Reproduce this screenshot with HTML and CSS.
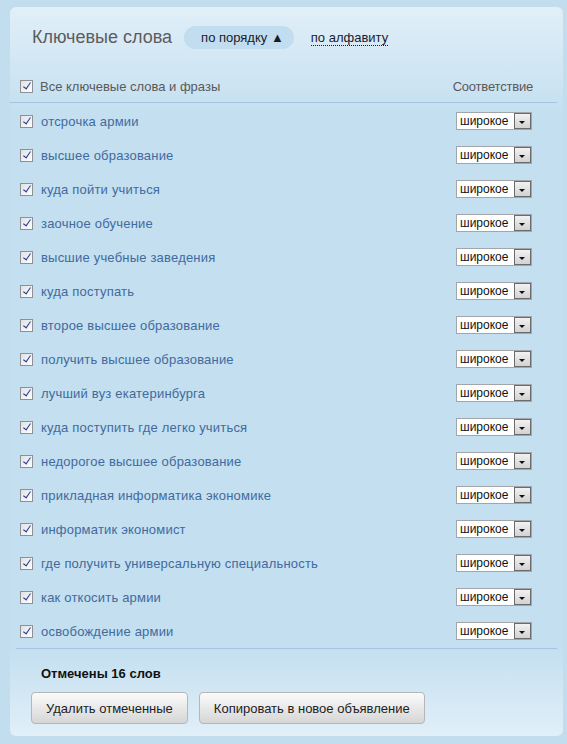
FILE: index.html
```html
<!DOCTYPE html>
<html lang="ru">
<head>
    <meta charset="UTF-8">
    <title>Ключевые слова</title>
    <link rel="stylesheet" href="styles.css">
</head>
<body>
    <div class="panel">
        <div class="header">
            <h2>Ключевые слова</h2>
            <span class="sort active">по порядку &#9650;</span>
            <span class="sort link">по алфавиту</span>
        </div>

        <div class="head-row">
            <span class="check"></span>
            <span class="label">Все ключевые слова и фразы</span>
            <span class="match">Соответствие</span>
        </div>

        <div class="list">
            <div class="row"><span class="check"></span><span class="word">отсрочка армии</span><div class="select"><span>широкое</span><i></i></div></div>
            <div class="row"><span class="check"></span><span class="word">высшее образование</span><div class="select"><span>широкое</span><i></i></div></div>
            <div class="row"><span class="check"></span><span class="word">куда пойти учиться</span><div class="select"><span>широкое</span><i></i></div></div>
            <div class="row"><span class="check"></span><span class="word">заочное обучение</span><div class="select"><span>широкое</span><i></i></div></div>
            <div class="row"><span class="check"></span><span class="word">высшие учебные заведения</span><div class="select"><span>широкое</span><i></i></div></div>
            <div class="row"><span class="check"></span><span class="word">куда поступать</span><div class="select"><span>широкое</span><i></i></div></div>
            <div class="row"><span class="check"></span><span class="word">второе высшее образование</span><div class="select"><span>широкое</span><i></i></div></div>
            <div class="row"><span class="check"></span><span class="word">получить высшее образование</span><div class="select"><span>широкое</span><i></i></div></div>
            <div class="row"><span class="check"></span><span class="word">лучший вуз екатеринбурга</span><div class="select"><span>широкое</span><i></i></div></div>
            <div class="row"><span class="check"></span><span class="word">куда поступить где легко учиться</span><div class="select"><span>широкое</span><i></i></div></div>
            <div class="row"><span class="check"></span><span class="word">недорогое высшее образование</span><div class="select"><span>широкое</span><i></i></div></div>
            <div class="row"><span class="check"></span><span class="word">прикладная информатика экономике</span><div class="select"><span>широкое</span><i></i></div></div>
            <div class="row"><span class="check"></span><span class="word">информатик экономист</span><div class="select"><span>широкое</span><i></i></div></div>
            <div class="row"><span class="check"></span><span class="word">где получить универсальную специальность</span><div class="select"><span>широкое</span><i></i></div></div>
            <div class="row"><span class="check"></span><span class="word">как откосить армии</span><div class="select"><span>широкое</span><i></i></div></div>
            <div class="row"><span class="check"></span><span class="word">освобождение армии</span><div class="select"><span>широкое</span><i></i></div></div>
        </div>

        <div class="footer">
            <p class="count">Отмечены 16 слов</p>
            <div class="buttons">
                <button>Удалить отмеченные</button>
                <button>Копировать в новое объявление</button>
            </div>
        </div>
    </div>
</body>
</html>
```

FILE: styles.css
```css
body {
    margin: 0;
    padding: 7px 4px 8px 10px;
    background-color: #c1ddee;
    font-family: "Liberation Sans", Arial, sans-serif;
    font-size: 13px;
}
.panel {
    width: 553px;
    height: 729px;
    box-sizing: border-box;
    border-radius: 6px;
    background: linear-gradient(to bottom, #e1eff8 0, #c3dff0 110px, #c3dff0 640px, #e1eff8 100%);
    display: flex;
    flex-direction: column;
}
.header {
    display: flex;
    align-items: center;
    height: 23px;
    padding: 19px 0 0 22px;
}
.header h2 {
    margin: 0 12px 0 0;
    font-size: 18px;
    font-weight: normal;
    color: #5c5c5c;
}
.sort {
    color: #1a1a2e;
    font-size: 13px;
}
.sort.active {
    height: 23px;
    line-height: 23px;
    padding: 0 10px 0 17px;
    border-radius: 12px;
    background-color: #c2ddef;
    margin-right: 17px;
}
.sort.link {
    line-height: 15px;
    border-bottom: 1px dotted #1a1a2e;
}
.head-row {
    display: flex;
    align-items: center;
    height: 32px;
    margin: 21px 6px 0 0;
    padding: 0 24px 0 10px;
    border-bottom: 1px solid #a9c2e4;
    color: #5a5a5a;
}
.head-row .label {
    margin-left: 7px;
}
.head-row .match {
    margin-left: auto;
    letter-spacing: -0.2px;
}
.list {
    padding-top: 1px;
}
.row {
    display: flex;
    align-items: center;
    height: 34px;
    padding: 0 31px 0 10px;
}
.row .word {
    margin-left: 8px;
    color: #426a9e;
    letter-spacing: 0.2px;
}
.check {
    position: relative;
    width: 11px;
    height: 11px;
    border: 1px solid #8e9094;
    background: linear-gradient(135deg, #e0e1e4, #ffffff);
    flex-shrink: 0;
}
.check::after {
    content: "";
    position: absolute;
    left: 4px;
    top: 0px;
    width: 3px;
    height: 7px;
    border-right: 1.5px solid #2c3b95;
    border-bottom: 1px solid #2c3b95;
    transform: rotate(35deg);
}
.select {
    display: flex;
    align-items: center;
    margin-left: auto;
    width: 76px;
    height: 18px;
    box-sizing: border-box;
    border: 1px solid #a2a6ab;
    background-color: #fff;
    font-size: 12px;
    color: #111;
}
.select span {
    padding-left: 3px;
}
.select i {
    position: relative;
    margin-left: auto;
    width: 15px;
    height: 14px;
    border: 1px solid #6b6b6b;
    background: linear-gradient(#f2f2f2, #d2d2d2);
}
.select i::after {
    content: "";
    position: absolute;
    left: 4px;
    top: 7px;
    border-left: 3.5px solid transparent;
    border-right: 3.5px solid transparent;
    border-top: 3px solid #111;
}
.footer {
    margin: 0 6px 0 6px;
    padding: 17px 0 0 15px;
    border-top: 1px solid #a9c2e4;
}
.count {
    margin: 0 0 10px 10px;
    line-height: 16px;
    font-weight: bold;
    font-size: 13px;
    color: #111;
}
.buttons {
    display: flex;
    gap: 11px;
}
.buttons button {
    height: 32px;
    padding: 0 14px;
    border: 1px solid #b4b6b8;
    border-radius: 4px;
    background: linear-gradient(#fbfbfb, #d6d6d6);
    font-family: "Liberation Sans", Arial, sans-serif;
    font-size: 13px;
    color: #222;
}
```
